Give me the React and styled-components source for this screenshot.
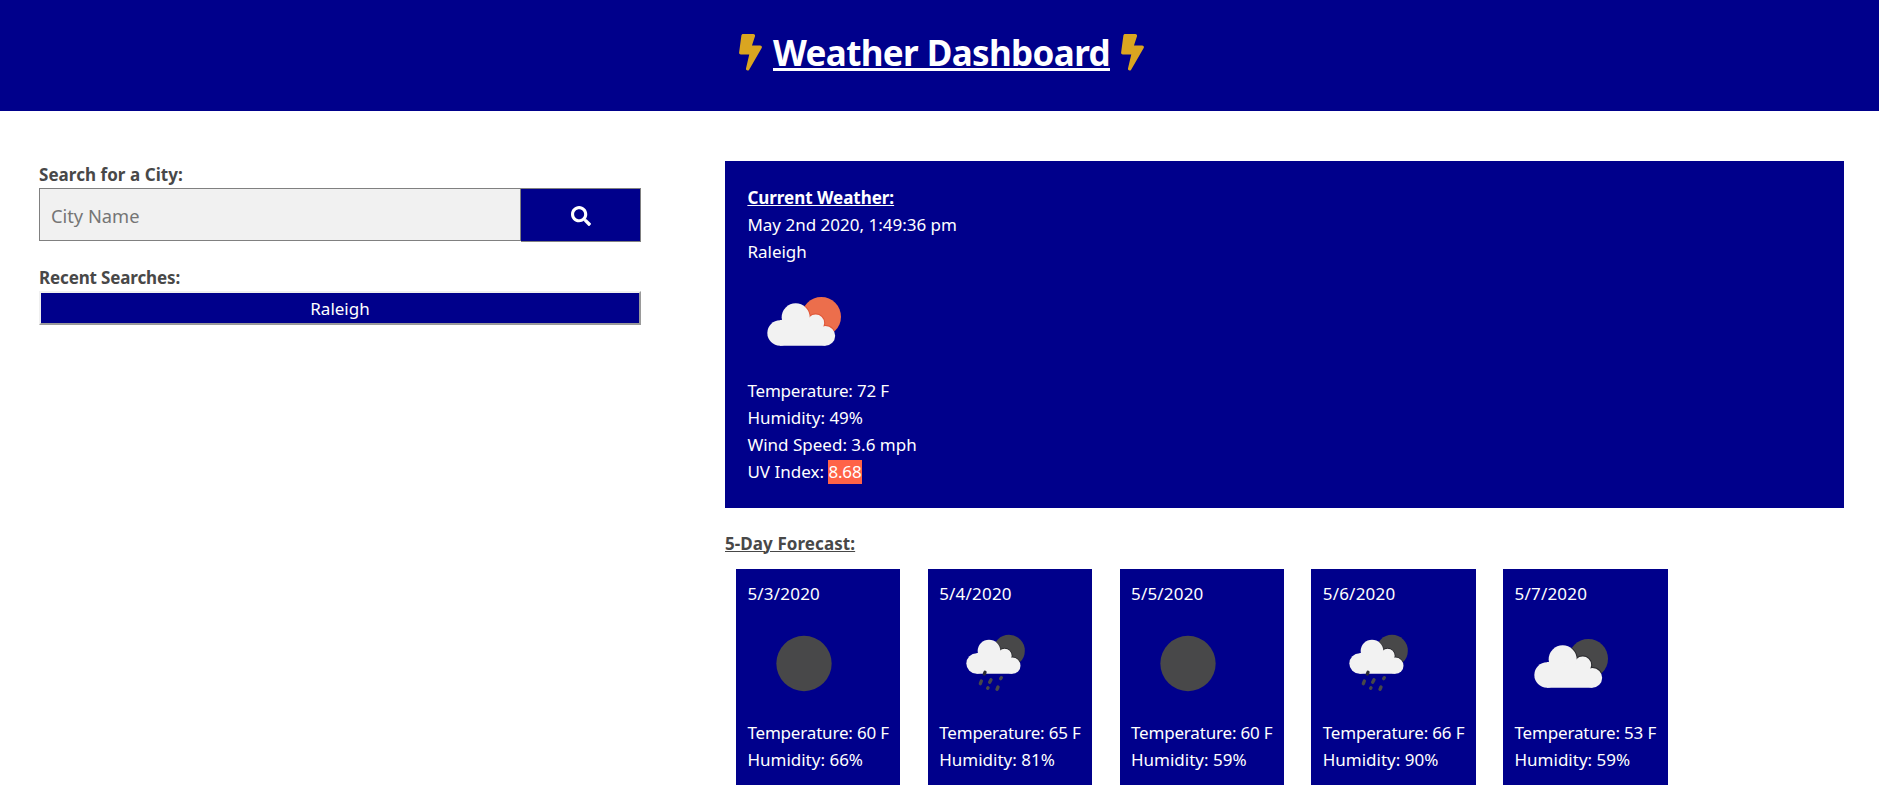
import React from "react";
import styled, { createGlobalStyle } from "styled-components";
import { FaBolt, FaSearch } from "react-icons/fa";

const GlobalStyle = createGlobalStyle`
  *, *::before, *::after { box-sizing: border-box; }
  body {
    margin: 0;
    background: #fff;
    color: #484848;
    font: 17px/27px "Noto Sans", "Open Sans", sans-serif;
  }
`;

const Header = styled.header`
  display: flex;
  justify-content: center;
  gap: 11px;
  height: 111px;
  padding: 34px 0 0 4px;
  background: #00008b;
  color: goldenrod;

  svg {
    width: 23px;
    height: 36.5px;
  }
`;

const Title = styled.h1`
  margin: -5px 0 0;
  color: #fff;
  font-size: 35px;
  line-height: 48px;
  letter-spacing: -0.62px;
  text-decoration: underline;
  text-decoration-thickness: 3px;
  text-underline-offset: 2px;
  text-decoration-skip-ink: none;
`;

const Main = styled.main`
  display: grid;
  grid-template-columns: 602px 1119px;
  column-gap: 84px;
  padding: 50px 0 0 39px;
`;

const Sidebar = styled.aside`
  display: flex;
  flex-direction: column;
`;

const Label = styled.label`
  font-weight: 700;
  letter-spacing: ${(p) => p.$tracking || "0"};
`;

const SearchForm = styled.form`
  display: flex;
  align-items: flex-start;
  margin-bottom: 22px;
`;

const SearchInput = styled.input`
  width: 482px;
  height: 53px;
  padding: 1px 11px 0;
  border: 1px solid #808080;
  border-radius: 0;
  background: #f1f1f1;
  font: 18.3px "Noto Sans", sans-serif;

  &::placeholder { color: #757575; }
`;

const SearchButton = styled.button`
  display: flex;
  align-items: center;
  justify-content: center;
  width: 120px;
  height: 54px;
  padding: 2px 0 0 1px;
  border: 1px solid #808080;
  border-left: 0;
  background: #00008b;
  color: #fff;
  font-size: 20px;
`;

const RecentButton = styled.button`
  height: 34px;
  padding: 0;
  border: 2px solid;
  border-color: #f0f0f0 #9a9a9a #9a9a9a #f0f0f0;
  background: #00008b;
  color: #fff;
  font: 17px/27px "Noto Sans", sans-serif;
`;

const CurrentPanel = styled.section`
  height: 347px;
  padding: 23px 22.4px;
  background: #00008b;
  color: #fff;
`;

const Heading = styled.h2`
  margin: 0;
  font-size: 17px;
  line-height: 27px;
  letter-spacing: ${(p) => p.$tracking || "0"};
  text-decoration: underline;
  text-decoration-thickness: 1px;
  text-underline-offset: 1px;
`;

const Line = styled.p`
  margin: 0;
  white-space: nowrap;
  letter-spacing: ${(p) => p.$tracking || "0"};
`;

const UvBadge = styled.span`
  padding-bottom: 1px;
  background: tomato;
  letter-spacing: -0.15px;
`;

const WeatherImage = styled.svg`
  display: block;
  width: 100px;
  height: 100px;
  margin: ${(p) => (p.$large ? "1px 0 11px 0.6px" : "1px 0 11px 0.7px")};
`;

const Forecast = styled.section`
  padding-top: 22px;
`;

const CardRow = styled.div`
  display: flex;
  gap: 27.4px;
  padding: 12px 0 0 11px;
`;

const Card = styled.article`
  width: 164.4px;
  height: 216px;
  padding: 11px 0 12px 11.4px;
  background: #00008b;
  color: #fff;
`;

function CloudySky({ large, sun }) {
  return (
    <WeatherImage $large={large} viewBox="99 348 300 300">
      <clipPath id={`disc-${sun.slice(1)}`}>
        <circle cx="319" cy="500" r="59" />
      </clipPath>
      <circle cx="319" cy="500" r="59" fill={sun} />
      <g clipPath={`url(#disc-${sun.slice(1)})`} fill="none" stroke={large ? "#e0583a" : "#2c2c30"} strokeWidth="4">
        <circle cx="242" cy="502" r="43" />
        <circle cx="302" cy="519" r="27" />
        <circle cx="331" cy="558" r="31" />
      </g>
      <g fill="#f2f2f2">
        <circle cx="195" cy="549" r="38" />
        <circle cx="242" cy="502" r="42" />
        <circle cx="302" cy="519" r="25.5" />
        <circle cx="331" cy="557.5" r="29.5" />
        <path d="M195 510H240L302 515L331 540V587H195Z" />
      </g>
    </WeatherImage>
  );
}

function ClearSky() {
  return (
    <WeatherImage viewBox="99 144 300 300">
      <circle cx="267" cy="310.5" r="83" fill="#484849" />
    </WeatherImage>
  );
}

function RainySky() {
  return (
    <WeatherImage viewBox="675 144 300 300">
      <clipPath id="rain-disc">
        <circle cx="882" cy="272" r="47.5" />
      </clipPath>
      <circle cx="882" cy="272" r="47.5" fill="#484849" />
      <g clipPath="url(#rain-disc)" fill="none" stroke="#29292d" strokeWidth="3">
        <circle cx="822" cy="273" r="34.5" />
        <circle cx="869" cy="287" r="22" />
        <circle cx="892" cy="317" r="25.5" />
      </g>
      <g fill="#f2f2f2">
        <circle cx="785" cy="310.5" r="31" />
        <circle cx="822" cy="273" r="34" />
        <circle cx="869" cy="287" r="21" />
        <circle cx="892" cy="317" r="24.5" />
        <path d="M785 279H822L869 284L892 300V341.5H785Z" />
      </g>
      <g stroke="#484849" strokeWidth="10" strokeLinecap="round">
        <path d="M810 337L808 342" stroke="#2b2b33" />
        <path d="M799 363L796 371M828 359L824 367M859 353L857 356M819 383L818 385M849 381L846 388" />
      </g>
    </WeatherImage>
  );
}

const days = [
  { date: "5/3/2020", sky: <ClearSky />, temp: 60, humidity: 66 },
  { date: "5/4/2020", sky: <RainySky />, temp: 65, humidity: 81 },
  { date: "5/5/2020", sky: <ClearSky />, temp: 60, humidity: 59 },
  { date: "5/6/2020", sky: <RainySky />, temp: 66, humidity: 90 },
  { date: "5/7/2020", sky: <CloudySky sun="#484849" />, temp: 53, humidity: 59 },
];

export default function App() {
  return (
    <>
      <GlobalStyle />
      <Header>
        <FaBolt />
        <Title>Weather Dashboard</Title>
        <FaBolt />
      </Header>
      <Main>
        <Sidebar>
          <Label htmlFor="city" $tracking="0.05px">Search for a City:</Label>
          <SearchForm>
            <SearchInput id="city" placeholder="City Name" />
            <SearchButton type="button" aria-label="Search">
              <FaSearch />
            </SearchButton>
          </SearchForm>
          <Label as="span" $tracking="-0.14px">Recent Searches:</Label>
          <RecentButton type="button">Raleigh</RecentButton>
        </Sidebar>
        <div>
          <CurrentPanel>
            <Heading $tracking="-0.03px">Current Weather:</Heading>
            <Line>May 2nd 2020, 1:49:36 pm</Line>
            <Line>Raleigh</Line>
            <CloudySky large sun="#ec6e4c" />
            <Line $tracking="-0.18px">Temperature: 72 F</Line>
            <Line>Humidity: 49%</Line>
            <Line>Wind Speed: 3.6 mph</Line>
            <Line>UV Index: <UvBadge>8.68</UvBadge></Line>
          </CurrentPanel>
          <Forecast>
            <Heading $tracking="0.08px">5-Day Forecast:</Heading>
            <CardRow>
              {days.map((d) => (
                <Card key={d.date}>
                  <Line $tracking="0.2px">{d.date}</Line>
                  {d.sky}
                  <Line $tracking="-0.18px">Temperature: {d.temp} F</Line>
                  <Line>Humidity: {d.humidity}%</Line>
                </Card>
              ))}
            </CardRow>
          </Forecast>
        </div>
      </Main>
    </>
  );
}
